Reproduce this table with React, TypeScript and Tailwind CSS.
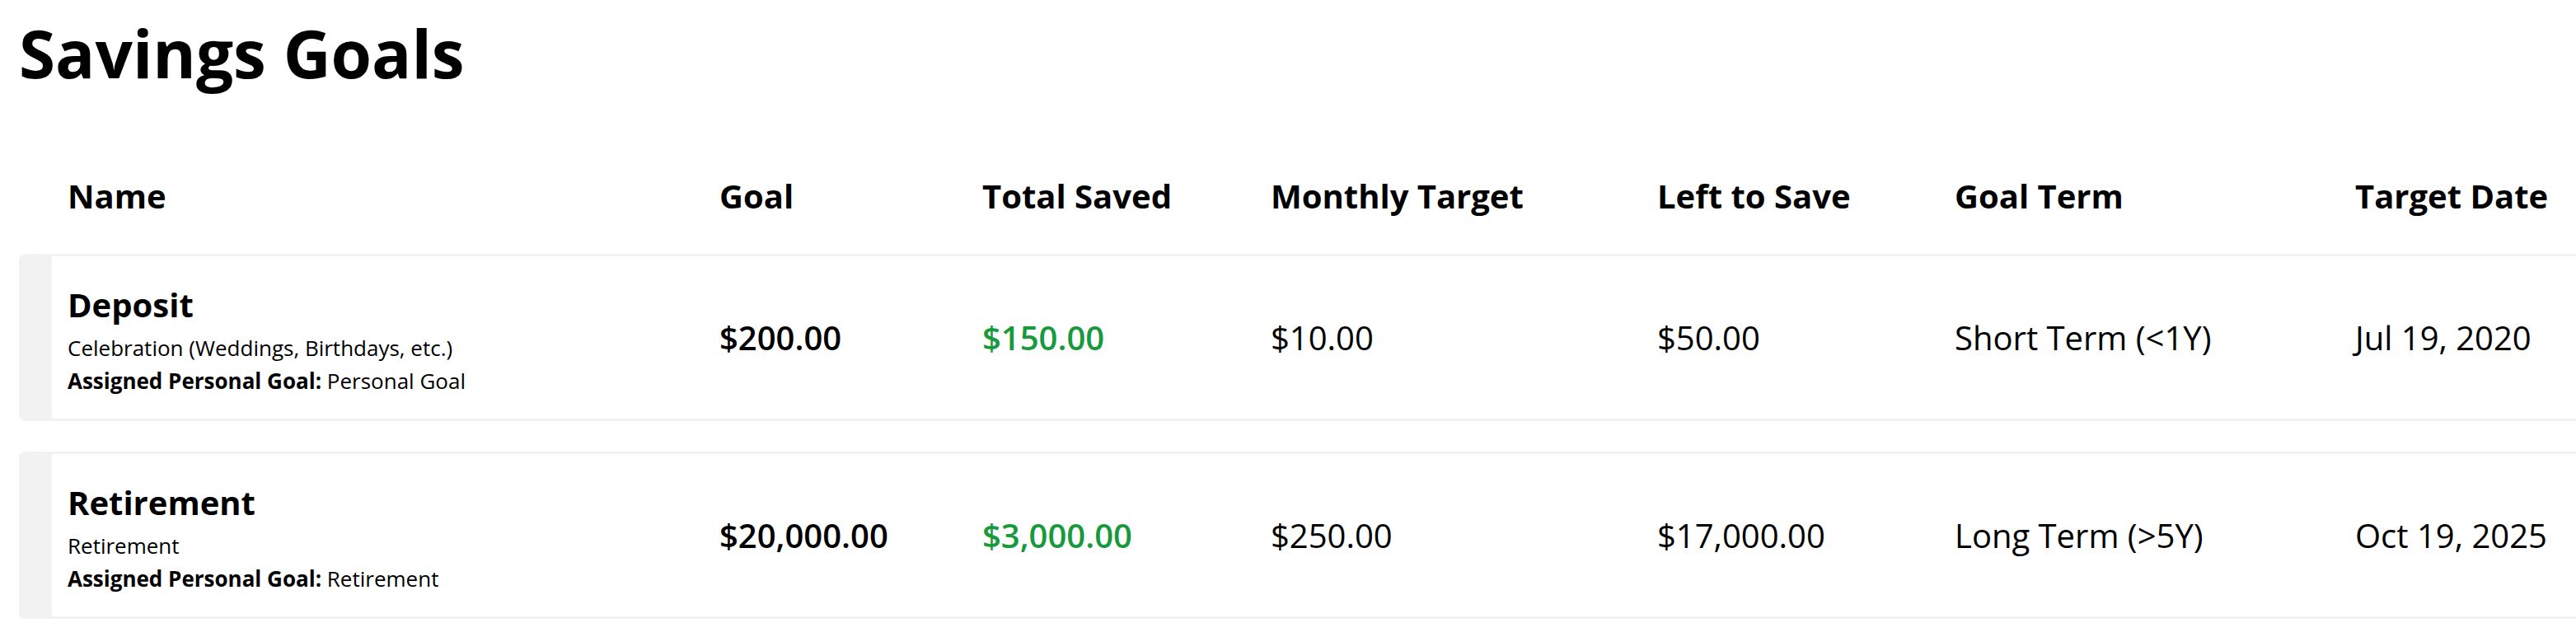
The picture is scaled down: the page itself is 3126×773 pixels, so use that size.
const goals = [
  {
    name: "Deposit",
    category: "Celebration (Weddings, Birthdays, etc.)",
    personalGoal: "Personal Goal",
    goal: "$200.00",
    saved: "$150.00",
    monthly: "$10.00",
    left: "$50.00",
    term: "Short Term (<1Y)",
    date: "Jul 19, 2020",
  },
  {
    name: "Retirement",
    category: "Retirement",
    personalGoal: "Retirement",
    goal: "$20,000.00",
    saved: "$3,000.00",
    monthly: "$250.00",
    left: "$17,000.00",
    term: "Long Term (>5Y)",
    date: "Oct 19, 2025",
  },
];

const App = () => {
  return (
    <div className="min-h-screen bg-white pl-[23px] pt-[14px] text-black font-['Open_Sans',sans-serif]">
      <h1 className="text-[80px] font-bold leading-[100px] mb-[54px]">
        Savings Goals
      </h1>

      <div className="grid grid-cols-[850px_319px_350px_469px_361px_486px_1fr] items-center py-[42px] text-[40px] font-bold leading-[56px]">
        <div className="pl-[59px]">Name</div>
        <div>Goal</div>
        <div>Total Saved</div>
        <div>Monthly Target</div>
        <div>Left to Save</div>
        <div>Goal Term</div>
        <div>Target Date</div>
      </div>

      <div className="flex flex-col gap-[37px]">
        {goals.map((g) => (
          <div
            key={g.name}
            className="grid grid-cols-[810px_319px_350px_469px_361px_486px_1fr] items-center h-[203px] border-y-[3px] border-l-[40px] border-[#f2f2f2] rounded-l-lg text-[40px] leading-[56px]"
          >
            <div className="pl-[19px]">
              <div className="font-bold leading-[64px]">{g.name}</div>
              <div className="text-[26px] leading-[40px]">{g.category}</div>
              <div className="text-[26px] leading-[40px]">
                <span className="font-bold">Assigned Personal Goal:</span>{" "}
                {g.personalGoal}
              </div>
            </div>
            <div className="font-semibold">{g.goal}</div>
            <div className="font-semibold text-[#17993d]">{g.saved}</div>
            <div>{g.monthly}</div>
            <div>{g.left}</div>
            <div>{g.term}</div>
            <div>{g.date}</div>
          </div>
        ))}
      </div>
    </div>
  );
};

export default App;
